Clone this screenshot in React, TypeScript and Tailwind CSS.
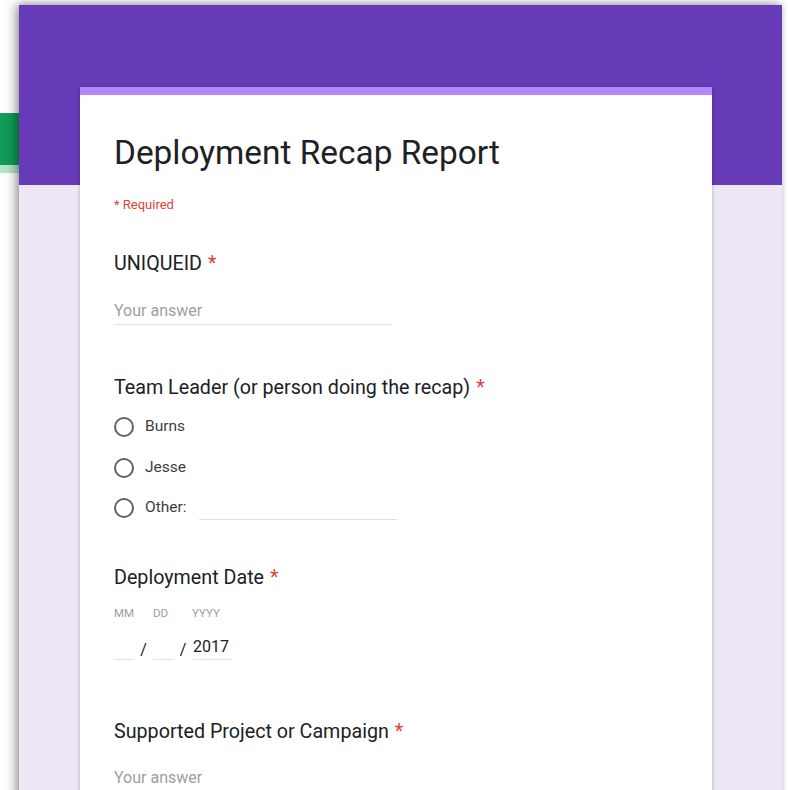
import React from "react";

const font = { fontFamily: "Roboto, 'Liberation Sans', Arial, sans-serif" };

function Star() {
  return <span className="text-[#db4437] ml-[6px]">*</span>;
}

function QuestionTitle({ children }: { children: React.ReactNode }) {
  return (
    <div className="text-[19.7px] leading-[24px] text-[#202124]">
      {children}
      <Star />
    </div>
  );
}

function TextAnswer() {
  return (
    <div className="w-[278px] border-b border-[#e0e0e0] pb-[3px] text-[16px] leading-[20px] text-[#9e9e9e]">
      Your answer
    </div>
  );
}

function Radio({ label, other }: { label: string; other?: boolean }) {
  return (
    <div className="flex items-center h-[20px]">
      <span className="w-[20px] h-[20px] rounded-full border-2 border-[#5f6368] box-border" />
      <span className="ml-[11px] text-[15.5px] text-[#3c4043]">{label}</span>
      {other && <span className="ml-[12px] w-[198px] h-[20px] border-b border-[#e0e0e0] translate-y-[2px]" />}
    </div>
  );
}

export default function App() {
  return (
    <div className="relative w-[788px] h-[790px] bg-white overflow-hidden" style={font}>
      {/* spreadsheet window peeking out behind the form */}
      <div className="absolute left-0 top-[113px] w-[22px] h-[60px]">
        <div className="h-[52px] bg-[#0f9d58]" />
        <div className="h-[8px] bg-[#b7e4c7]" />
      </div>

      <div className="relative ml-[19px] mt-[5px] w-[763px] h-[800px] bg-[#ede7f6] shadow-[-4px_0_10px_rgba(0,0,0,0.35),0_-2px_6px_rgba(0,0,0,0.15)]">
        <div className="h-[180px] bg-[#673ab7]" />
        <div className="-mt-[98px] ml-[61px] w-[632px] h-[720px] bg-white shadow-[0_1px_4px_rgba(0,0,0,0.25)]">
          <div className="h-[8px] bg-[#b388ff]" />
          <div className="pl-[34px] pt-[36px]">
            <h1 className="text-[33.4px] leading-[44px] text-[#202124]">Deployment Recap Report</h1>
            <div className="mt-[22px] text-[13px] leading-[16px] text-[#db4437]">* Required</div>

            <div className="mt-[39px]">
              <QuestionTitle>UNIQUEID</QuestionTitle>
              <div className="mt-[25px]">
                <TextAnswer />
              </div>
            </div>

            <div className="mt-[51px]">
              <QuestionTitle>Team Leader (or person doing the recap)</QuestionTitle>
              <div className="mt-[17px] flex flex-col gap-[20.5px]">
                <Radio label="Burns" />
                <Radio label="Jesse" />
                <Radio label="Other:" other />
              </div>
            </div>

            <div className="mt-[48px]">
              <QuestionTitle>Deployment Date</QuestionTitle>
              <div className="mt-[16px] flex text-[11.5px] leading-[14px] text-[#9e9e9e]">
                <span className="w-[39px]">MM</span>
                <span className="w-[39px]">DD</span>
                <span>YYYY</span>
              </div>
              <div className="mt-[17px] flex items-end text-[16px] leading-[20px] text-[#202124]">
                <span className="w-[20px] h-[20px] border-b border-[#e0e0e0]" />
                <span className="w-[19px] text-center">/</span>
                <span className="w-[20px] h-[20px] border-b border-[#e0e0e0]" />
                <span className="w-[20px] text-center">/</span>
                <span className="w-[39px] border-b border-[#e0e0e0] pb-[2px]">2017</span>
              </div>
            </div>

            <div className="mt-[60px]">
              <QuestionTitle>Supported Project or Campaign</QuestionTitle>
              <div className="mt-[24px]">
                <TextAnswer />
              </div>
            </div>
          </div>
        </div>
      </div>
    </div>
  );
}
